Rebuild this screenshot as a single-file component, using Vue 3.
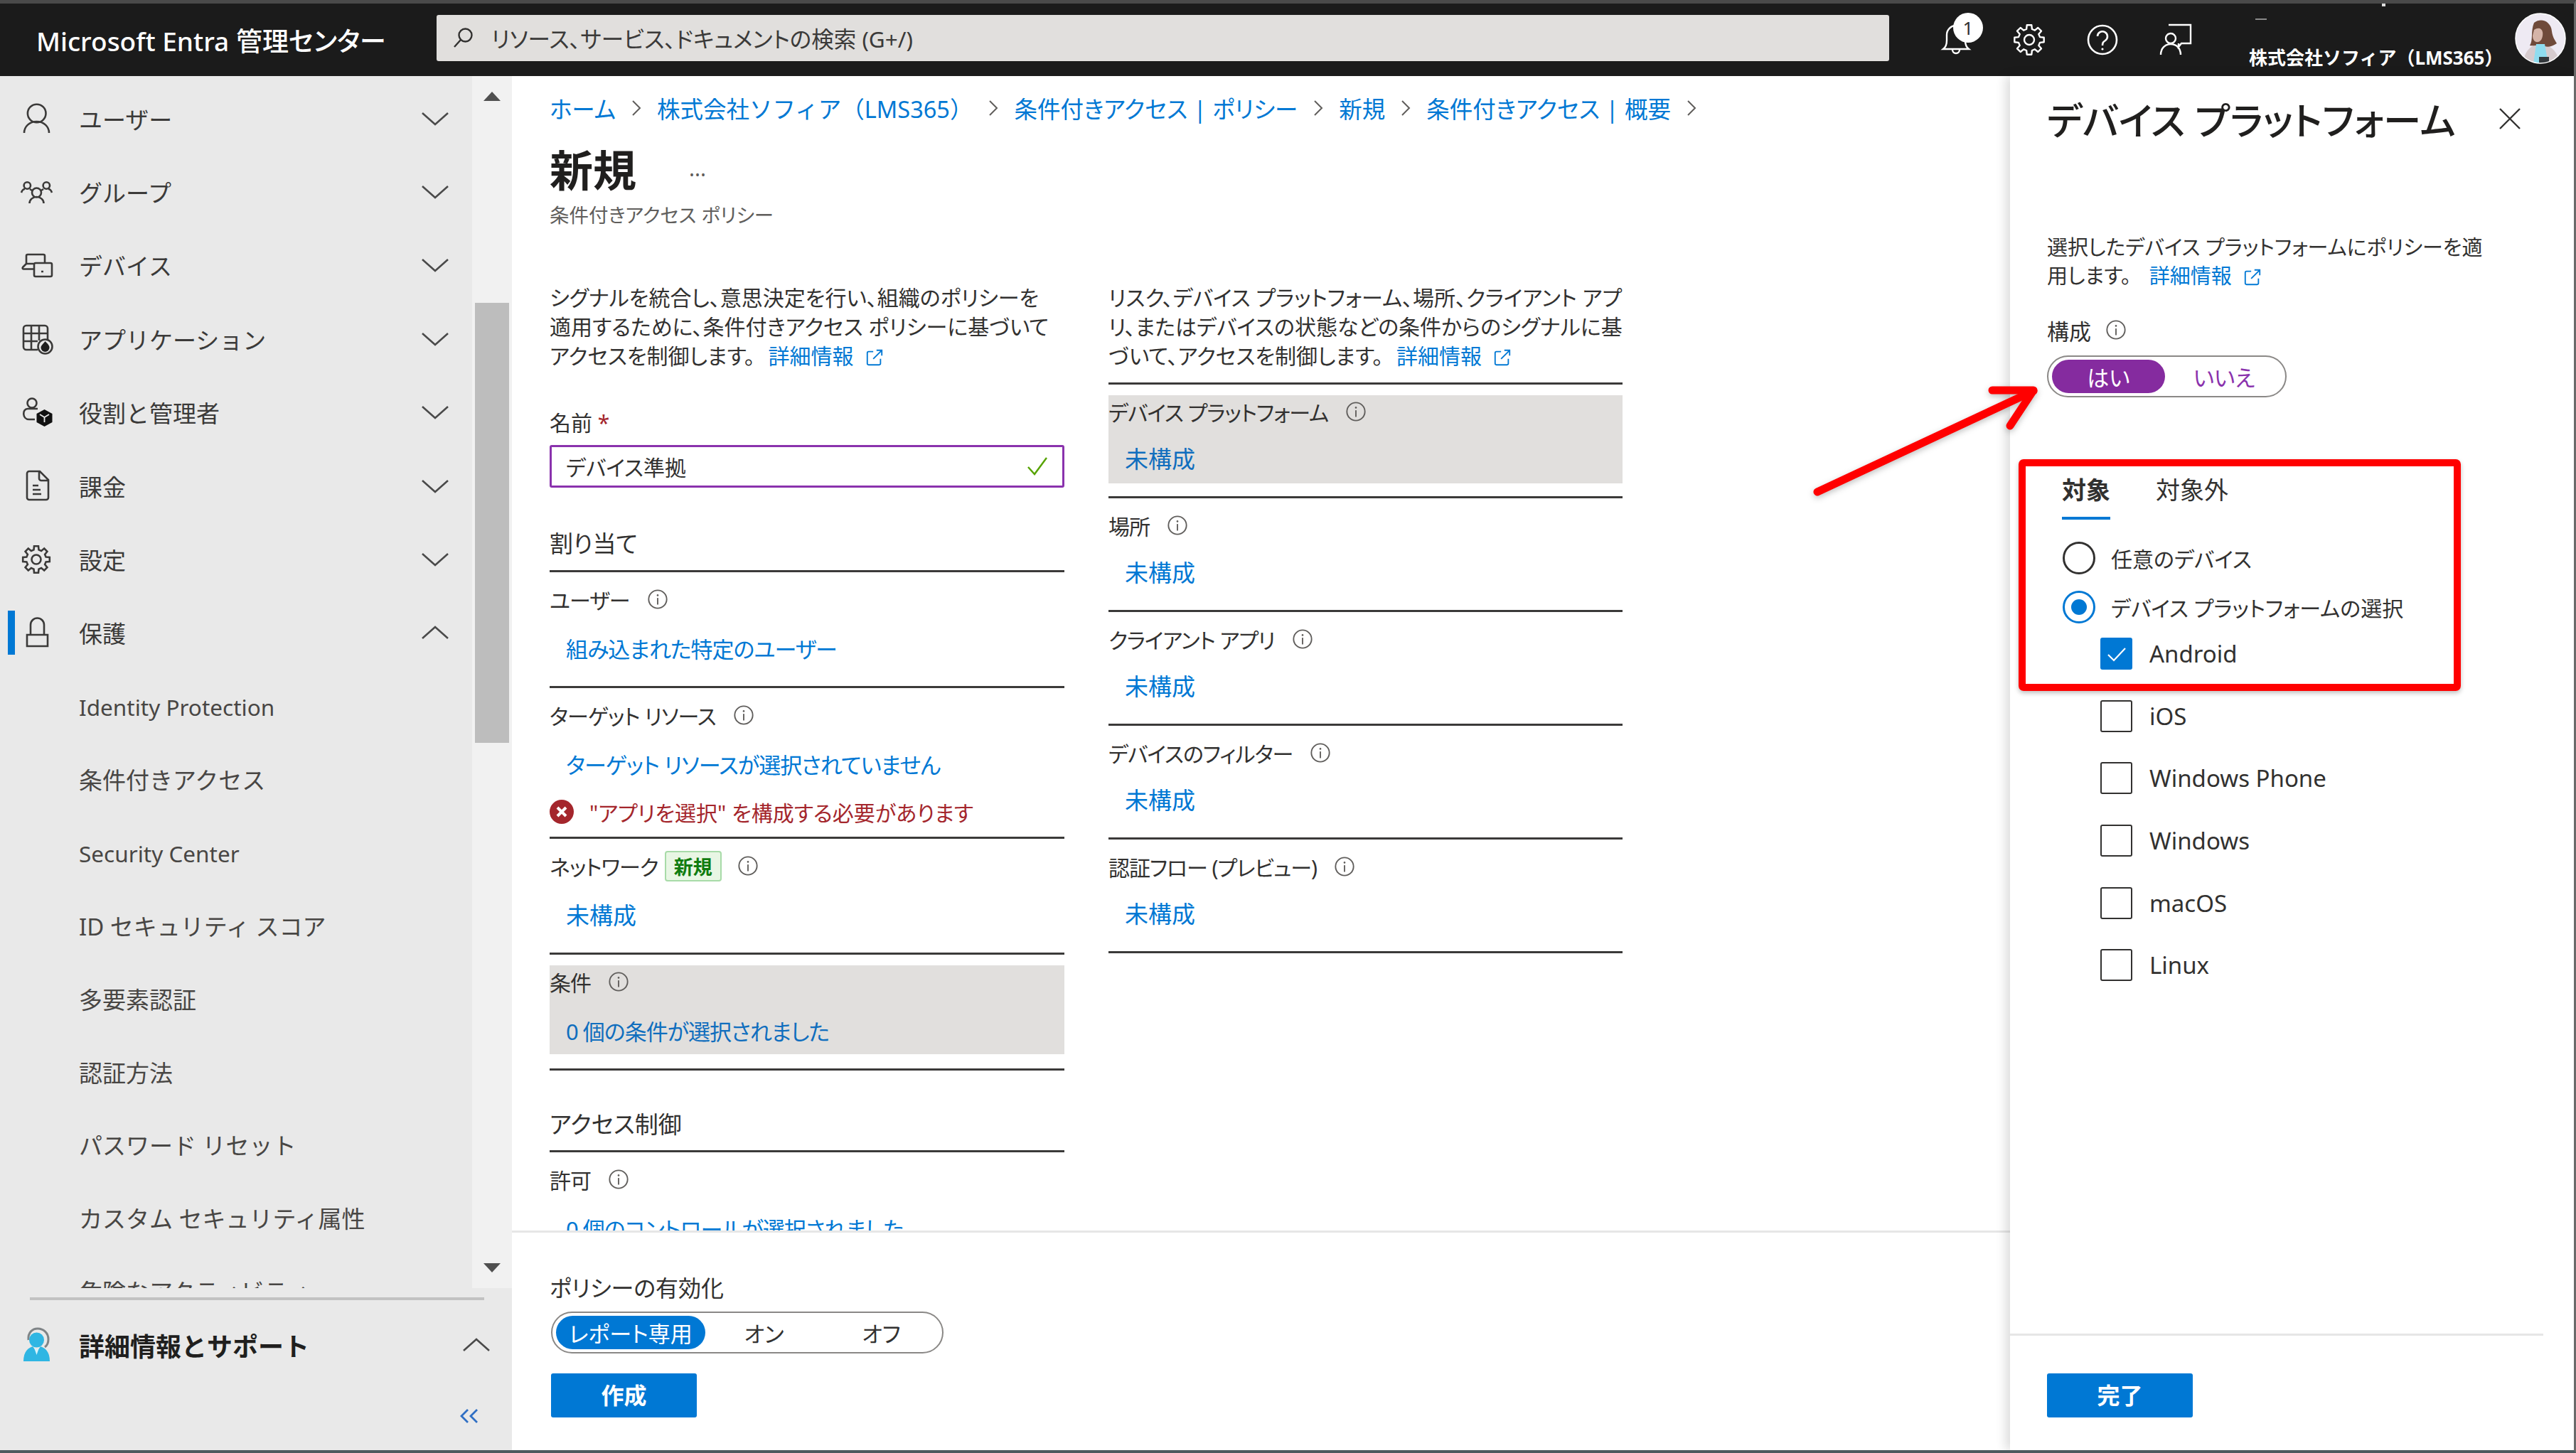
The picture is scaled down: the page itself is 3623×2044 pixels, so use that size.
<template>
  <div class="shot">
    <svg class="defs" aria-hidden="true">
      <symbol id="i-info" viewBox="0 0 32 32">
        <circle cx="16" cy="16" r="13.5" fill="none" stroke="#605e5c" stroke-width="2" />
        <rect x="15" y="14" width="2" height="10" fill="#605e5c" />
        <circle cx="16" cy="10" r="1.4" fill="#605e5c" />
      </symbol>
      <symbol id="i-ext" viewBox="0 0 28 28">
        <path d="M12 5H5a2 2 0 0 0-2 2v16a2 2 0 0 0 2 2h16a2 2 0 0 0 2-2v-7M17 3h8v8M25 3 12 16" fill="none"
          stroke="#0078d4" stroke-width="2" />
      </symbol>
      <symbol id="i-down" viewBox="0 0 40 20">
        <path d="M2 2 20 18 38 2" fill="none" stroke="#4a4a4a" stroke-width="2.6" />
      </symbol>
    </svg>

    <header class="topbar">
      <div class="brand">Microsoft Entra 管理センター</div>
      <div class="search">
        <svg class="search-ico" width="32" height="32" viewBox="0 0 32 32" fill="none" stroke="#323130" stroke-width="2.4">
          <circle cx="19.5" cy="12.5" r="9" />
          <path d="M13 19 4 29" />
        </svg>
        <span>リソース、サービス、ドキュメントの検索 (G+/)</span>
      </div>
      <div class="top-icons">
        <div class="ticon">
          <svg width="44" height="50" viewBox="0 0 44 50" fill="none" stroke="#fff" stroke-width="2.4">
            <path d="M4 38c4-3 5-6 5-12V18a13 13 0 0 1 26 0v8c0 6 1 9 5 12z" />
            <path d="M17 39a5 5 0 0 0 10 0" />
          </svg>
          <span class="badge">1</span>
        </div>
        <div class="ticon">
          <svg width="46" height="46" viewBox="0 0 46 46" fill="none" stroke="#fff" stroke-width="2.4" stroke-linejoin="round">
            <path :d="gearPath(23, 23, 21, 15.5)" />
            <circle cx="23" cy="23" r="7" />
          </svg>
        </div>
        <div class="ticon">
          <svg width="46" height="46" viewBox="0 0 46 46" fill="none" stroke="#fff" stroke-width="2.6">
            <circle cx="23" cy="23" r="20" />
            <path d="M16 18a7 7 0 1 1 11 6c-3 2-4 3-4 7" />
            <circle cx="23" cy="36" r="1.6" fill="#fff" stroke="none" />
          </svg>
        </div>
        <div class="ticon">
          <svg width="46" height="46" viewBox="0 0 46 46" fill="none" stroke="#fff" stroke-width="2.4">
            <path d="M13 2h31v26H31l-4 5v-5" />
            <circle cx="16" cy="21" r="7" />
            <path d="M2 44c0-9 6-15 14-15s14 6 14 15" />
          </svg>
        </div>
      </div>
      <div class="tenant">
        <i class="speck dash"></i>
        <i class="speck dot"></i>
        <span>株式会社ソフィア（LMS365）</span>
      </div>
      <svg class="avatar" width="72" height="72" viewBox="0 0 72 72">
        <clipPath id="av"><circle cx="36" cy="36" r="35" /></clipPath>
        <g clip-path="url(#av)">
          <rect width="72" height="72" fill="#eeeaf3" />
          <path d="M12 72c0-16 10-28 24-28s26 12 26 28z" fill="#d6cbce" />
          <path d="M27 14c10-8 24-2 25 12 1 8 4 12 7 17-6 4-12 6-17 4-6-2-18 0-21-1 5-7 1-20 6-32z" fill="#6f4a3a" />
          <path d="M27 24c6-4 11-2 12 3s-1 13-6 14c-5 1-8-3-8-9z" fill="#d5b4a8" />
          <path d="M30 44h12l5 28H26z" fill="#8fdcef" />
          <rect x="34" y="62" width="14" height="10" fill="#33383c" />
        </g>
        <circle cx="36" cy="36" r="35" fill="none" stroke="#fff" stroke-width="1.5" />
      </svg>
    </header>

    <div class="body">
      <aside class="sidebar">
        <div class="nav-wrap">
          <nav class="nav">
            <div v-for="item in navItems" :key="item.label" class="nav-row">
              <i v-if="item.active" class="active-bar"></i>
              <svg class="nav-ico" width="64" height="64" viewBox="0 0 64 64" fill="none" stroke="#3b3a39" stroke-width="2.6">
                <path :d="item.icon === 'gear' ? gearPath(32, 32, 19, 14) : icons[item.icon]" />
                <circle v-if="item.icon === 'gear'" cx="32" cy="32" r="6.5" />
                <g v-if="item.icon === 'apps'">
                  <circle cx="44.5" cy="42.5" r="10" fill="#e9e9e9" />
                  <path d="M44.5 35c4 4 6 6 6 9a6 6 0 0 1-12 0c0-3 3-5 6-9z" fill="#1f1f1f" stroke="none" />
                </g>
                <g v-if="item.icon === 'roles'">
                  <path d="m43.5 28 11 6v12l-11 6-11-6V34z" fill="#111" stroke="none" />
                  <path d="m37 35 6.500 4 6.500-4M43.500 39v7" stroke="#e9e9e9" stroke-width="1.800" />
                </g>
              </svg>
              <span class="nav-label">{{ item.label }}</span>
              <svg class="chev" :class="{ up: item.active }"><use href="#i-down" /></svg>
            </div>
            <div class="subs">
              <div v-for="sub in subItems" :key="sub.label" class="sub-row" :class="{ latin: sub.latin }">{{ sub.label }}</div>
            </div>
          </nav>
          <div class="scrollbar">
            <i class="tri up"></i>
            <div class="thumb"></div>
            <i class="tri down"></i>
          </div>
        </div>
        <div class="support">
          <div class="support-row">
            <svg class="nav-ico" width="64" height="64" viewBox="0 0 64 64">
              <path d="M21 25c-1-11 6-16 13-16 8 0 15 6 15 15 0 5-2 9-5 11" fill="none" stroke="#7f8487" stroke-width="3" />
              <circle cx="32.500" cy="25" r="10.500" fill="#2fb6e3" />
              <path d="M14 55c0-14 7-19 13-21l5.500 8 5.500-8c6 2 13 7 13 21z" fill="#2fb6e3" />
              <path d="m29 36 3.500 3 3.500-3-3.500 10z" fill="#d9f3fb" />
            </svg>
            <span class="support-label">詳細情報とサポート</span>
            <svg class="chev up"><use href="#i-down" /></svg>
          </div>
          <div class="collapse">
            <svg width="28" height="22" viewBox="0 0 28 22" fill="none" stroke="#2f6fc4" stroke-width="2.800">
              <path d="M12 2 3 11l9 9M25 2l-9 9 9 9" />
            </svg>
          </div>
        </div>
      </aside>

      <main class="main">
        <div class="scroller">
          <div class="crumbs">
            <template v-for="c in crumbs" :key="c.label">
              <a class="link" :class="{ full: c.full }">{{ c.label }}</a>
              <svg width="16" height="30" viewBox="0 0 16 30" fill="none" stroke="#605e5c" stroke-width="2">
                <path d="m3 5 10 10L3 25" />
              </svg>
            </template>
          </div>
          <div class="title-row">
            <h1>新規</h1>
            <span class="more">...</span>
          </div>
          <div class="subtitle">条件付きアクセス ポリシー</div>

          <div class="cols">
            <div class="col">
              <p class="desc">シグナルを統合し、意思決定を行い、組織のポリシーを<br />適用するために、条件付きアクセス ポリシーに基づいて<br />アクセスを制御します。 <a class="link">詳細情報</a><svg class="ext"><use href="#i-ext" /></svg></p>
              <label class="field-label">名前 <b>*</b></label>
              <div class="input">
                <span>デバイス準拠</span>
                <svg width="30" height="30" viewBox="0 0 30 30" fill="none" stroke="#57a300" stroke-width="2.400">
                  <path d="m2 16 9 10L28 3" />
                </svg>
              </div>
              <div class="sec-head first">割り当て</div>
              <div v-for="it in leftItems" :key="it.label" class="item-wrap">
                <div class="item" :class="{ shaded: it.shaded }">
                  <div class="item-label">
                    <span>{{ it.label }}</span>
                    <span v-if="it.tag" class="tag">{{ it.tag }}</span>
                    <svg class="info"><use href="#i-info" /></svg>
                  </div>
                  <a class="link item-link" :class="{ kanji: it.kanji }">{{ it.link }}</a>
                  <div v-if="it.error" class="err">
                    <svg width="34" height="34" viewBox="0 0 34 34">
                      <circle cx="17" cy="17" r="17" fill="#a4262c" />
                      <path d="m11 11 12 12M23 11 11 23" stroke="#fff" stroke-width="4" />
                    </svg>
                    <span>{{ it.error }}</span>
                  </div>
                </div>
              </div>
              <div class="sec-head">アクセス制御</div>
              <div class="item-wrap">
                <div class="item">
                  <div class="item-label">
                    <span>許可</span>
                    <svg class="info"><use href="#i-info" /></svg>
                  </div>
                  <a class="link item-link">0 個のコントロールが選択されました</a>
                </div>
              </div>
            </div>

            <div class="col right">
              <p class="desc">リスク、デバイス プラットフォーム、場所、クライアント アプ<br />リ、またはデバイスの状態などの条件からのシグナルに基<br />づいて、アクセスを制御します。 <a class="link">詳細情報</a><svg class="ext"><use href="#i-ext" /></svg></p>
              <div class="rule"></div>
              <div v-for="it in rightItems" :key="it.label" class="item-wrap">
                <div class="item" :class="{ shaded: it.shaded }">
                  <div class="item-label">
                    <span>{{ it.label }}</span>
                    <svg class="info"><use href="#i-info" /></svg>
                  </div>
                  <a class="link item-link kanji">未構成</a>
                </div>
              </div>
            </div>
          </div>
        </div>

        <footer class="main-foot">
          <div class="foot-label">ポリシーの有効化</div>
          <div class="toggle">
            <span class="opt sel report">レポート専用</span>
            <span class="opt wide">オン</span>
            <span class="opt wide">オフ</span>
          </div>
          <button class="primary">作成</button>
        </footer>
      </main>

      <section class="panel">
        <div class="panel-head">
          <h2>デバイス プラットフォーム</h2>
          <svg width="32" height="32" viewBox="0 0 32 32" fill="none" stroke="#323130" stroke-width="2.400">
            <path d="m2 2 28 28M30 2 2 30" />
          </svg>
        </div>
        <p class="panel-desc">選択したデバイス プラットフォームにポリシーを適<br />用します。 <a class="link">詳細情報</a><svg class="ext"><use href="#i-ext" /></svg></p>
        <div class="conf-label">構成<svg class="info"><use href="#i-info" /></svg></div>
        <div class="toggle purple">
          <span class="opt sel">はい</span>
          <span class="opt">いいえ</span>
        </div>
        <div class="tabs">
          <span class="tab on">対象</span>
          <span class="tab">対象外</span>
        </div>
        <div class="radio-row">
          <i class="radio"></i>
          <span>任意のデバイス</span>
        </div>
        <div class="radio-row">
          <i class="radio checked"></i>
          <span>デバイス プラットフォームの選択</span>
        </div>
        <div class="checks">
          <div v-for="p in platforms" :key="p.name" class="check-row">
            <i class="box" :class="{ on: p.on }">
              <svg v-if="p.on" width="28" height="22" viewBox="0 0 28 22" fill="none" stroke="#fff" stroke-width="2.200">
                <path d="m2 12 8 8L26 3" />
              </svg>
            </i>
            <span>{{ p.name }}</span>
          </div>
        </div>
        <div class="panel-foot">
          <button class="primary">完了</button>
        </div>
      </section>
    </div>

    <!-- 赤枠と矢印は画面上の注釈 -->
    <div class="mark-box"></div>
    <svg class="mark-arrow" width="340" height="180" viewBox="0 0 340 180" fill="none" stroke="#ff0000" stroke-width="11"
      stroke-linecap="round" stroke-linejoin="round">
      <path d="M10 168 314 26" />
      <path d="M256 25h58l-33 50" />
    </svg>
  </div>
</template>

<script setup>
const navItems = [
  { label: 'ユーザー', icon: 'user' },
  { label: 'グループ', icon: 'group' },
  { label: 'デバイス', icon: 'device' },
  { label: 'アプリケーション', icon: 'apps' },
  { label: '役割と管理者', icon: 'roles' },
  { label: '課金', icon: 'doc' },
  { label: '設定', icon: 'gear' },
  { label: '保護', icon: 'lock', active: true }
]

const subItems = [
  { label: 'Identity Protection', latin: true },
  { label: '条件付きアクセス' },
  { label: 'Security Center', latin: true },
  { label: 'ID セキュリティ スコア' },
  { label: '多要素認証' },
  { label: '認証方法' },
  { label: 'パスワード リセット' },
  { label: 'カスタム セキュリティ属性' },
  { label: '危険なアクティビティ' }
]

const icons = {
  user: 'M45.500 24.500a12.800 12.800 0 1 1-25.600 0 12.800 12.800 0 0 1 25.600 0zM15 52c0-9 7.500-16 17.500-16S50 43 50 52',
  group:
    'M39 33a6.500 6.500 0 1 1-13 0 6.500 6.500 0 0 1 13 0zM22.500 48c0-5 4.500-9 10-9s10 4 10 9M24 23a4.700 4.700 0 1 1-9.400 0 4.700 4.700 0 0 1 9.400 0zM11 33c1-3 3-5 5-5M23 28l3 2M51 23a4.700 4.700 0 1 1-9.400 0 4.700 4.700 0 0 1 9.400 0zM54 33c-1-3-3-5-5-5M42 28l-3 2',
  device:
    'M18 30V19a2 2 0 0 1 2-2h22a2 2 0 0 1 2 2v9M18 30l-5 5a1.500 1.500 0 0 0 1 2.500h14M18 30h10M31 29h21a2 2 0 0 1 2 2v15a2 2 0 0 1-2 2H31a2 2 0 0 1-2-2V31a2 2 0 0 1 2-2zM39 41h3',
  apps: 'M34 47H18a4 4 0 0 1-4-4V17a4 4 0 0 1 4-4h26a4 4 0 0 1 4 4v16M14 24h34M14 35h20M25 13v34M36 13v21',
  roles: 'M32.500 19a6.500 6.500 0 1 1-13 0 6.500 6.500 0 0 1 13 0zM34 27H20c-8 0-8 15 2 15h8',
  doc: 'M22 11h15l12 12v25a3 3 0 0 1-3 3H22a3 3 0 0 1-3-3V14a3 3 0 0 1 3-3zM36 11v10a3 3 0 0 0 3 3h10M27 31h8M27 37h11M27 43h12',
  lock: 'M19 35h29v16H19zM24 35V21a9.500 9.500 0 0 1 19 0v14'
}

const crumbs = [
  { label: 'ホーム' },
  { label: '株式会社ソフィア（LMS365）', full: true },
  { label: '条件付きアクセス | ポリシー' },
  { label: '新規' },
  { label: '条件付きアクセス | 概要' }
]

const leftItems = [
  { label: 'ユーザー', link: '組み込まれた特定のユーザー' },
  {
    label: 'ターゲット リソース',
    link: 'ターゲット リソースが選択されていません',
    error: '"アプリを選択" を構成する必要があります'
  },
  { label: 'ネットワーク', tag: '新規', link: '未構成', kanji: true },
  { label: '条件', link: '0 個の条件が選択されました', shaded: true }
]

const rightItems = [
  { label: 'デバイス プラットフォーム', shaded: true },
  { label: '場所' },
  { label: 'クライアント アプリ' },
  { label: 'デバイスのフィルター' },
  { label: '認証フロー (プレビュー)' }
]

const platforms = [
  { name: 'Android', on: true },
  { name: 'iOS' },
  { name: 'Windows Phone' },
  { name: 'Windows' },
  { name: 'macOS' },
  { name: 'Linux' }
]

// 歯車の輪郭を歯の数ぶん計算する
function gearPath(cx, cy, outer, inner, teeth = 8) {
  const pts = []
  const step = (Math.PI * 2) / teeth
  for (let i = 0; i < teeth; i++) {
    const a = i * step
    const w = step * 0.2
    const list = [
      [inner, a - step * 0.32],
      [outer, a - w],
      [outer, a + w],
      [inner, a + step * 0.32]
    ]
    list.forEach(([r, t]) => {
      pts.push((cx + r * Math.cos(t)).toFixed(1) + ' ' + (cy + r * Math.sin(t)).toFixed(1))
    })
  }
  return 'M' + pts.join('L') + 'z'
}
</script>

<style>
html,
body {
  margin: 0;
  background: #fff;
}
</style>

<style scoped>
.shot {
  position: relative;
  box-sizing: border-box;
  width: 3623px;
  height: 2044px;
  display: flex;
  flex-direction: column;
  overflow: hidden;
  border-top: 5px solid #4a4a4a;
  border-right: 3px solid #6a6a6a;
  border-bottom: 4px solid #4d5a5e;
  font-family: 'Noto Sans', 'Noto Sans CJK JP', sans-serif;
  font-feature-settings: 'palt';
  color: #323130;
  background: #fff;
}

.defs {
  position: absolute;
  width: 0;
  height: 0;
}

.topbar {
  flex: 0 0 102px;
  display: flex;
  align-items: center;
  background: #1b1b1b;
  color: #fff;
}

.brand {
  width: 614px;
  padding-left: 51px;
  box-sizing: border-box;
  font-size: 37px;
  font-weight: 500;
  white-space: nowrap;
}

.search {
  width: 2043px;
  height: 65px;
  margin-top: -6px;
  display: flex;
  align-items: center;
  gap: 24px;
  padding-left: 21px;
  box-sizing: border-box;
  background: #e1dfdd;
  border-radius: 3px;
  font-size: 31.500px;
  color: #3b3a39;
}

.top-icons {
  display: flex;
  margin-left: 42px;
}

.ticon {
  position: relative;
  width: 103px;
  display: flex;
  align-items: center;
  justify-content: center;
}

.ticon svg {
  display: block;
}

.badge {
  position: absolute;
  left: 48px;
  top: -13px;
  width: 42px;
  height: 42px;
  border-radius: 50%;
  background: #fff;
  color: #323130;
  font-size: 26px;
  line-height: 42px;
  text-align: center;
}

.tenant {
  position: relative;
  width: 341px;
  margin-left: 52px;
  align-self: flex-end;
  padding-bottom: 8px;
  font-size: 26px;
  font-weight: 700;
  font-feature-settings: normal;
  white-space: nowrap;
}

.speck {
  position: absolute;
  background: #8a8a8a;
}

.speck.dash {
  left: 9px;
  top: -35px;
  width: 16px;
  height: 2px;
}

.speck.dot {
  left: 187px;
  top: -56px;
  width: 5px;
  height: 4px;
  background: #ddd;
}

.avatar {
  margin-left: 33px;
  margin-top: -4px;
}

.body {
  flex: 1;
  min-height: 0;
  display: flex;
}

.sidebar {
  flex: 0 0 720px;
  display: flex;
  flex-direction: column;
  background: #e9e9e9;
}

.nav-wrap {
  flex: 0 0 1705px;
  display: flex;
  min-height: 0;
}

.nav {
  flex: 1;
  padding-top: 8px;
  overflow: hidden;
  font-feature-settings: normal;
}

.nav-row {
  position: relative;
  height: 103.400px;
  display: flex;
  align-items: center;
  padding-left: 19px;
}

.active-bar {
  position: absolute;
  left: 11px;
  top: 20px;
  width: 10px;
  height: 62px;
  background: #0078d4;
}

.nav-label {
  margin-left: 28px;
  font-size: 33px;
  color: #3b3a39;
  white-space: nowrap;
}

.chev {
  width: 40px;
  height: 20px;
  margin-left: auto;
  margin-right: 32px;
}

.chev.up {
  transform: scaleY(-1);
}

.subs {
  margin-top: 2px;
}

.sub-row {
  height: 102.900px;
  line-height: 102.900px;
  padding-left: 111px;
  font-size: 33px;
  color: #484644;
  white-space: nowrap;
}

.sub-row.latin {
  font-size: 31.500px;
}

.scrollbar {
  flex: 0 0 56px;
  display: flex;
  flex-direction: column;
  align-items: center;
  background: #f1f1f1;
}

.tri {
  width: 0;
  height: 0;
  border-left: 12px solid transparent;
  border-right: 12px solid transparent;
}

.tri.up {
  margin-top: 22px;
  border-bottom: 13px solid #4f4f4f;
}

.tri.down {
  margin-top: auto;
  margin-bottom: 22px;
  border-top: 13px solid #4f4f4f;
}

.thumb {
  width: 48px;
  height: 619px;
  margin-top: 284px;
  background: #bdbdbd;
}

.support {
  flex: 1;
  position: relative;
  padding-top: 13px;
}

.support-row {
  position: relative;
  display: flex;
  align-items: center;
  height: 120px;
  padding-top: 10px;
  box-sizing: border-box;
  border-top: 4px solid #c2c2c2;
  margin-left: 42px;
  margin-right: 39px;
}

.support-row .nav-ico {
  margin-left: -23px;
}

.support-label {
  margin-left: 28px;
  font-size: 36px;
  font-weight: 700;
  font-feature-settings: normal;
  color: #201f1e;
}

.support-row .chev {
  margin-right: -9px;
}

.collapse {
  display: flex;
  justify-content: flex-end;
  padding: 36px 46px 0 0;
}

.main {
  flex: 1;
  min-width: 0;
  display: flex;
  flex-direction: column;
}

.scroller {
  flex: 1;
  min-height: 0;
  overflow: hidden;
  padding-left: 53px;
}

.link {
  color: #0078d4;
}

.crumbs {
  display: flex;
  align-items: center;
  gap: 21px;
  height: 40px;
  margin-top: 25px;
  font-size: 32.500px;
  white-space: nowrap;
}

.crumbs .full {
  font-feature-settings: normal;
}

.title-row {
  display: flex;
  align-items: center;
  height: 80px;
  margin-top: 28px;
}

h1 {
  margin: 0;
  font-size: 61px;
  font-weight: 700;
  line-height: 80px;
  color: #201f1e;
}

.more {
  margin-left: 74px;
  font-size: 30px;
  line-height: 30px;
  margin-top: -6px;
  color: #605e5c;
}

.subtitle {
  margin-top: 3px;
  font-size: 27.500px;
  line-height: 40px;
  color: #605e5c;
}

.cols {
  display: grid;
  grid-template-columns: 724px 723px;
  column-gap: 62px;
  margin-top: 75px;
}

.desc {
  margin: 0;
  height: 123px;
  font-size: 30px;
  line-height: 41px;
  white-space: nowrap;
}

.desc .link {
  margin-left: 11px;
}

.ext {
  width: 26px;
  height: 26px;
  margin-left: 16px;
  vertical-align: -4px;
}

.field-label {
  display: block;
  margin-top: 54px;
  font-size: 30px;
  line-height: 40px;
}

.field-label b {
  color: #a4262c;
  font-weight: 400;
}

.input {
  box-sizing: border-box;
  height: 60px;
  margin-top: 11px;
  display: flex;
  align-items: center;
  justify-content: space-between;
  padding: 0 20px;
  border: 3px solid #8a32ad;
  border-radius: 3px;
  font-size: 30px;
}

.sec-head {
  margin-top: 56px;
  padding-bottom: 16px;
  font-size: 33px;
  line-height: 40px;
  border-bottom: 3px solid #3b3a39;
}

.sec-head.first {
  margin-top: 59px;
  padding-bottom: 17px;
}

.rule {
  margin-top: 17px;
  border-bottom: 3px solid #3b3a39;
}

.item-wrap {
  padding: 15px 0 20px;
  border-bottom: 3px solid #3b3a39;
}

.right .item-wrap {
  padding-bottom: 18px;
}

.item {
  box-sizing: border-box;
  min-height: 125px;
  padding: 3px 0 12px;
}

.right .item {
  min-height: 124px;
}

.item-label {
  display: flex;
  align-items: center;
  height: 40px;
  font-size: 30px;
  letter-spacing: -1px;
  white-space: nowrap;
}

.item.shaded {
  background: #e1dfdd;
}

.info {
  width: 30px;
  height: 30px;
  margin-left: 24px;
  flex: none;
}

.tag {
  box-sizing: border-box;
  height: 43px;
  margin-left: 9px;
  padding: 0 11px;
  display: flex;
  align-items: center;
  font-size: 27px;
  font-weight: 700;
  letter-spacing: 0;
  color: #107c10;
  background: #e8f6e4;
  border: 2px solid #a8dba8;
  border-radius: 4px;
}

.tag + .info {
  margin-left: 22px;
}

.item-link {
  display: block;
  margin-top: 30px;
  padding-left: 23px;
  font-size: 31px;
  line-height: 40px;
  letter-spacing: -1px;
  white-space: nowrap;
}

.item-link.kanji {
  font-size: 33px;
  letter-spacing: 0;
}

.right .item-link {
  margin-top: 27px;
}

.shaded .item-link {
  color: #106ebe;
}

.err {
  display: flex;
  align-items: center;
  gap: 22px;
  height: 40px;
  margin: 26px 0 -17px;
  font-size: 30px;
  color: #a4262c;
  white-space: nowrap;
}

.main-foot {
  flex: 0 0 309px;
  box-sizing: border-box;
  padding: 58px 0 0 55px;
  border-top: 3px solid #e6e6e6;
}

.foot-label {
  margin-left: -2px;
  font-size: 32px;
  line-height: 40px;
}

.toggle {
  box-sizing: content-box;
  display: flex;
  width: fit-content;
  height: 47px;
  margin-top: 13px;
  padding: 4px 3px 4px 5px;
  border: 2.500px solid #8a8886;
  border-radius: 30px;
  font-size: 31px;
}

.opt {
  width: 165px;
  display: flex;
  align-items: center;
  justify-content: center;
  border-radius: 24px;
}

.opt.sel {
  background: #0078d4;
  color: #fff;
}

.opt.report {
  width: 210px;
}

.toggle.purple {
  margin-top: 16px;
  color: #8a32ad;
}

.toggle.purple .opt {
  width: 166px;
}

.toggle.purple .opt.sel {
  width: 159px;
  background: #852b9f;
  color: #fff;
}

.primary {
  display: block;
  box-sizing: border-box;
  width: 205px;
  height: 62px;
  margin-top: 28px;
  padding: 0 0 5px;
  border: none;
  border-radius: 3px;
  background: #0078d4;
  color: #fff;
  font-family: inherit;
  font-size: 32px;
  font-weight: 700;
}

.panel {
  flex: 0 0 793px;
  box-sizing: border-box;
  display: flex;
  flex-direction: column;
  padding-left: 52px;
  background: #fff;
  box-shadow: -6px 0 14px rgba(0, 0, 0, 0.14);
  z-index: 1;
}

.panel-head {
  display: flex;
  align-items: center;
  height: 60px;
  margin-top: 30px;
}

h2 {
  margin: 0;
  width: 635px;
  font-size: 53.500px;
  font-weight: 500;
  color: #201f1e;
  white-space: nowrap;
}

.panel-desc {
  margin: 131px 0 0;
  font-size: 29px;
  line-height: 40px;
  white-space: nowrap;
}

.panel-desc .link {
  margin-left: 18px;
}

.conf-label {
  display: flex;
  align-items: center;
  height: 40px;
  margin-top: 36px;
  font-size: 31px;
}

.conf-label .info {
  margin-left: 20px;
}

.tabs {
  display: flex;
  gap: 64px;
  margin: 110px 0 19px 21px;
  font-size: 34px;
  line-height: 40px;
}

.tab {
  padding-bottom: 18px;
  border-bottom: 4px solid transparent;
}

.tab.on {
  font-weight: 700;
  border-bottom-color: #0078d4;
}

.radio-row {
  display: flex;
  align-items: center;
  gap: 22px;
  height: 69px;
  margin-left: 22px;
  font-size: 30px;
}

.radio {
  box-sizing: border-box;
  width: 46px;
  height: 46px;
  border-radius: 50%;
  border: 3px solid #323130;
  display: flex;
  align-items: center;
  justify-content: center;
}

.radio.checked {
  border-color: #0078d4;
}

.radio.checked::after {
  content: '';
  width: 22px;
  height: 22px;
  border-radius: 50%;
  background: #0078d4;
}

.checks {
  margin: -12px 0 0 75px;
}

.check-row {
  display: flex;
  align-items: center;
  gap: 24px;
  height: 87.600px;
  font-size: 33px;
}

.box {
  box-sizing: border-box;
  width: 45px;
  height: 45px;
  border: 2.500px solid #323130;
  border-radius: 3px;
  display: flex;
  align-items: center;
  justify-content: center;
}

.box.on {
  background: #0078d4;
  border-color: #0078d4;
}

.panel-foot {
  margin-top: auto;
  margin-right: 43px;
  margin-left: -52px;
  padding: 53px 0 46px 52px;
  border-top: 3px solid #e6e6e6;
}

.panel-foot .primary {
  margin-top: 0;
}

.mark-box {
  position: absolute;
  left: 2839px;
  top: 641px;
  width: 622px;
  height: 326px;
  box-sizing: border-box;
  border: 10px solid #ff0000;
  border-radius: 7px;
  box-shadow: 0 3px 6px rgba(0, 0, 0, 0.25);
  z-index: 2;
}

.mark-arrow {
  position: absolute;
  left: 2546px;
  top: 519px;
  z-index: 2;
  filter: drop-shadow(0 3px 4px rgba(0, 0, 0, 0.25));
}
</style>
